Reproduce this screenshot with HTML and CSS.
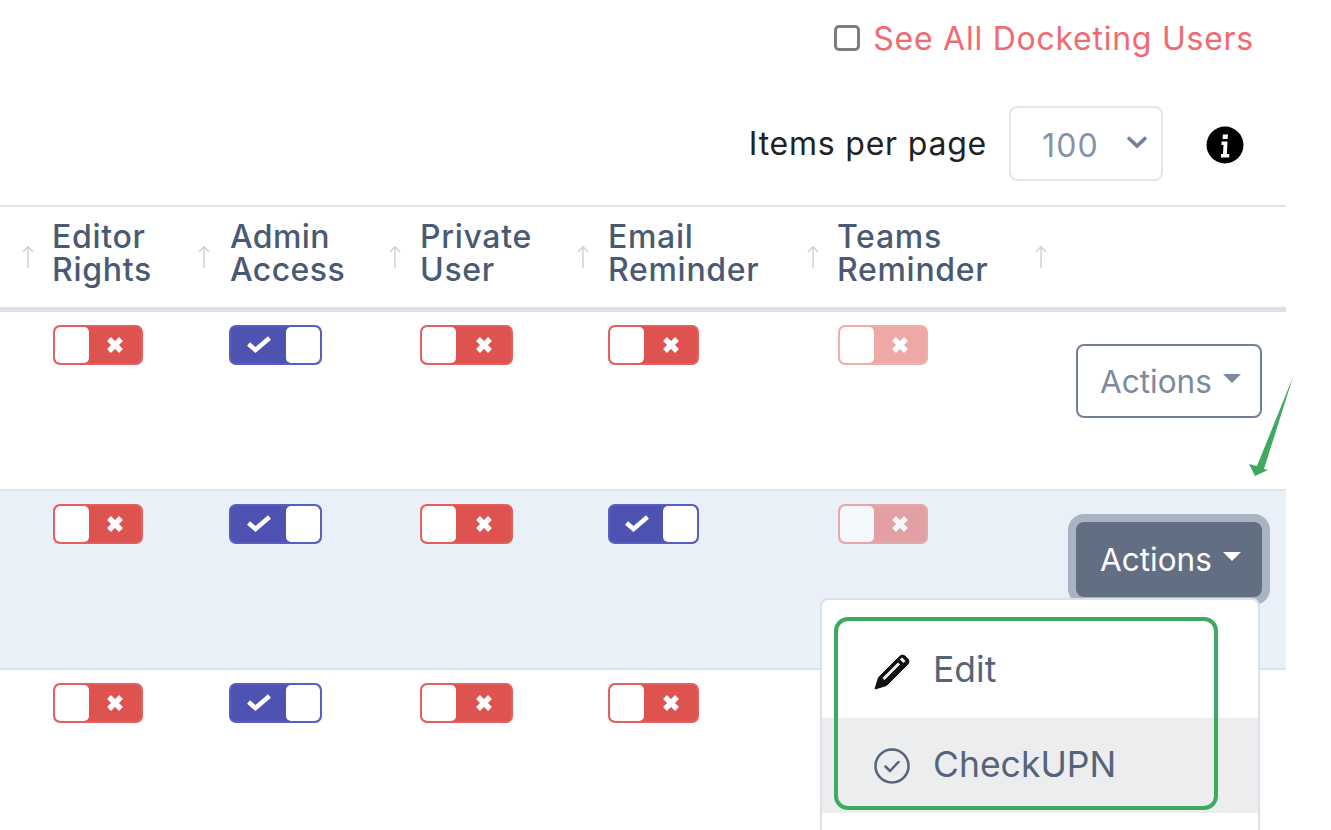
FILE: index.html
```html
<!DOCTYPE html>
<html lang="en">
<head>
<meta charset="utf-8">
<title>Docketing Users</title>
<link rel="stylesheet" href="styles.css">
</head>
<body>
<svg class="defs" aria-hidden="true">
  <symbol id="i-x" viewBox="0 0 20 20"><path d="M4 4 16 16M16 4 4 16"/></symbol>
  <symbol id="i-check" viewBox="0 0 26 18"><path d="M2.500 9 9.500 15 23.500 3"/></symbol>
  <symbol id="i-up" viewBox="0 0 14 24"><path d="M7 23V1.500M2 7 7 1.500 12 7"/></symbol>
</svg>
<main class="page">
  <div class="see-all">
    <span class="checkbox"></span>
    <span class="see-all-label">See All Docketing Users</span>
  </div>
  <div class="pager">
    <span class="pager-label">Items per page</span>
    <div class="select">
      <span>100</span>
      <svg class="chevron" viewBox="0 0 22 14"><path d="M2 2.500 11 11 20 2.500" /></svg>
    </div>
    <svg class="info" viewBox="0 0 38 38"><circle cx="19" cy="19" r="18.500"/><path class="info-i" d="M17 8.500h5l-.5 4.500h-5zM15.500 15.500h6l-.6 12.500h2.300v3.500h-8.200v-3.500h2l.5-9h-2z"/></svg>
  </div>

  <div class="table">
    <div class="row head">
      <div class="cell"><span></span><svg class="sort"><use href="#i-up"/></svg></div>
      <div class="cell"><span class="tight-left">Editor<br>Rights</span><svg class="sort"><use href="#i-up"/></svg></div>
      <div class="cell"><span class="nudge">Admin<br>Access</span><svg class="sort"><use href="#i-up"/></svg></div>
      <div class="cell"><span>Private<br>User</span><svg class="sort"><use href="#i-up"/></svg></div>
      <div class="cell"><span>Email<br>Reminder</span><svg class="sort"><use href="#i-up"/></svg></div>
      <div class="cell teams"><span class="tight-left">Teams<br>Reminder</span><svg class="sort"><use href="#i-up"/></svg></div>
      <div class="cell"></div>
    </div>

    <div class="row body">
      <div></div>
      <div><span class="toggle off w90"><i></i><b><svg class="ico-x"><use href="#i-x"/></svg></b></span></div>
      <div><span class="toggle on w93"><b><svg class="ico-check"><use href="#i-check"/></svg></b><i></i></span></div>
      <div><span class="toggle off w93"><i></i><b><svg class="ico-x"><use href="#i-x"/></svg></b></span></div>
      <div><span class="toggle off w91"><i></i><b><svg class="ico-x"><use href="#i-x"/></svg></b></span></div>
      <div><span class="toggle off w90 faded"><i></i><b><svg class="ico-x"><use href="#i-x"/></svg></b></span></div>
      <div class="action-cell"><span class="actions">Actions<em class="caret"></em></span></div>
    </div>

    <div class="row body active">
      <div></div>
      <div><span class="toggle off w90"><i></i><b><svg class="ico-x"><use href="#i-x"/></svg></b></span></div>
      <div><span class="toggle on w93"><b><svg class="ico-check"><use href="#i-check"/></svg></b><i></i></span></div>
      <div><span class="toggle off w93"><i></i><b><svg class="ico-x"><use href="#i-x"/></svg></b></span></div>
      <div><span class="toggle on w91"><b><svg class="ico-check"><use href="#i-check"/></svg></b><i></i></span></div>
      <div><span class="toggle off w90 faded"><i></i><b><svg class="ico-x"><use href="#i-x"/></svg></b></span></div>
      <div class="action-cell"><span class="actions open">Actions<em class="caret"></em></span></div>
    </div>

    <div class="row body last">
      <div></div>
      <div><span class="toggle off w90"><i></i><b><svg class="ico-x"><use href="#i-x"/></svg></b></span></div>
      <div><span class="toggle on w93"><b><svg class="ico-check"><use href="#i-check"/></svg></b><i></i></span></div>
      <div><span class="toggle off w93"><i></i><b><svg class="ico-x"><use href="#i-x"/></svg></b></span></div>
      <div><span class="toggle off w91"><i></i><b><svg class="ico-x"><use href="#i-x"/></svg></b></span></div>
      <div></div>
      <div></div>
    </div>
  </div>

  <div class="menu">
    <div class="menu-item">
      <svg class="menu-icon" viewBox="0 0 38 38"><path class="pencil" d="M2 37 5.500 25.500 27 4q2.500-2 5 0l3 3q2 2.500 0 5L13.500 33.500z"/><path class="pencil-in" d="M10.500 27 26 11.500M28 6.500l3.500 3.500"/></svg>
      <span>Edit</span>
    </div>
    <div class="menu-item hover">
      <svg class="menu-icon" viewBox="0 0 38 38"><circle class="circle" cx="19" cy="19" r="16.500"/><path class="circle" d="M12.500 19.500 17 24l8.500-9"/></svg>
      <span>CheckUPN</span>
    </div>
  </div>

  <div class="highlight"></div>
  <svg class="arrow" viewBox="1245 375 50 105"><path d="M1293 377 1264 469 1268 470 1255 476 1249 464 1257 466z"/></svg>
</main>
</body>
</html>
```
FILE: styles.css
```css
* { box-sizing: border-box; }
html, body { margin: 0; padding: 0; height: 100%; overflow: hidden; background: #fff; }
body { font-family: Inter, "Liberation Sans", sans-serif; font-size: 32px; color: #4a5a73; }

.defs { display: none; }
.page { position: relative; width: 1331px; height: 830px; overflow: hidden; }

.see-all { display: flex; justify-content: flex-end; align-items: center; gap: 13px; width: 1254px; height: 75px; }
.checkbox { width: 26px; height: 26px; border: 3px solid #7d7d7d; border-radius: 5px; background: #fff; }
.see-all-label { color: #f06a6f; font-size: 32px; letter-spacing: .75px; margin-top: 1px; }

.pager { display: flex; align-items: center; width: 1244px; height: 130px; justify-content: flex-end; padding-top: 6px; }
.pager-label { color: #222; margin-right: 22px; font-size: 32px; letter-spacing: .78px; margin-top: 0; }
.select { display: flex; align-items: center; justify-content: space-between; width: 154px; height: 75px; padding: 5px 13px 0 31px; border: 2px solid #e2e8f0; border-radius: 8px; color: #8393aa; font-size: 32px; letter-spacing: 1.2px; }
.chevron { width: 22px; height: 14px; margin-top: -7px; fill: none; stroke: #718096; stroke-width: 3.500; }
.info { width: 38px; height: 38px; margin-left: 43px; margin-top: 4px; }
.info circle { fill: #000; }
.info-i { fill: #fff; }

.table { width: 1286px; border-top: 2px solid #dfe3e9; }
.row { display: grid; grid-template-columns: 53px 176px 191px 188px 230px 238px 210px; }
.head { height: 105px; border-bottom: 5px solid #dedfe8; font-weight: 500; font-size: 32px; line-height: 33px; letter-spacing: .7px; }
.cell { display: flex; align-items: center; justify-content: space-between; padding-right: 18px; padding-bottom: 8px; }
.cell .tight-left { margin-left: -1px; }
.cell .nudge { margin-left: 1px; letter-spacing: .4px; }
.teams { padding-right: 28px; }
.sort { flex: none; width: 14px; height: 24px; margin-top: 8px; fill: none; stroke: #ccd3dc; stroke-width: 1.500; }
.body { height: 179px; padding-top: 13px; border-bottom: 2px solid #dfe3e9; }
.body.active { background: #e9f0f7; }
.body.last { border-bottom: 0; }
.action-cell { padding-top: 19px; }

.toggle { display: flex; align-items: center; height: 40px; border-radius: 7px; border: 2px solid; color: #fff; overflow: hidden; }
.w90 { width: 90px; }
.w91 { width: 91px; }
.w93 { width: 93px; }
.toggle i { display: block; flex: none; width: 34px; height: 100%; background: #fff; border-radius: 5px; }
.toggle b { flex: 1; display: flex; align-items: center; justify-content: center; height: 100%; }
.ico-x { width: 20px; height: 20px; fill: none; stroke: #fff; stroke-width: 5.500; }
.ico-check { width: 26px; height: 18px; margin-top: -2px; fill: none; stroke: #fff; stroke-width: 4.500; }
.off { background: #de5350; border-color: #e2615e; }
.on { background: #4e52b0; border-color: #5a5ec0; }
.faded { opacity: .5; }

.actions { display: inline-flex; align-items: center; width: 186px; height: 74px; padding: 1px 0 0 22px; border: 2px solid #718096; border-radius: 8px; color: #7c8a9e; font-size: 31.500px; background: #fff; }
.actions.open { background: #626f82; border-color: #626f82; color: #fff; height: 75px; margin-top: -1px; padding-top: 0; box-shadow: 0 0 0 8px #a9b4c3; }
.caret { width: 0; height: 0; margin-left: 11px; margin-top: -6px; border-left: 9px solid transparent; border-right: 9px solid transparent; border-top: 9px solid currentColor; }

.menu { position: absolute; left: 820px; top: 598px; width: 440px; height: 300px; padding-top: 23px; background: #fff; border: 2px solid #dde1e7; border-radius: 8px; }
.menu-item { display: flex; align-items: center; gap: 22px; height: 95px; padding-left: 51px; color: #566479; font-size: 35.500px; line-height: 44px; }
.menu-item span { margin-bottom: 2px; }
.menu-item.hover { background: #ebedef; }
.menu-icon { flex: none; width: 38px; height: 38px; }
.pencil { fill: #111; stroke: #111; stroke-width: 1; stroke-linejoin: round; }
.pencil-in { fill: none; stroke: #eee; stroke-width: 3; }
.circle { fill: none; stroke: #566479; stroke-width: 2.500; stroke-linecap: round; stroke-linejoin: round; }

.highlight { position: absolute; left: 834px; top: 617px; width: 384px; height: 193px; border: 4px solid #3faa5f; border-radius: 14px; }
.arrow { position: absolute; left: 1245px; top: 375px; width: 50px; height: 105px; fill: #3faa5f; }
```
